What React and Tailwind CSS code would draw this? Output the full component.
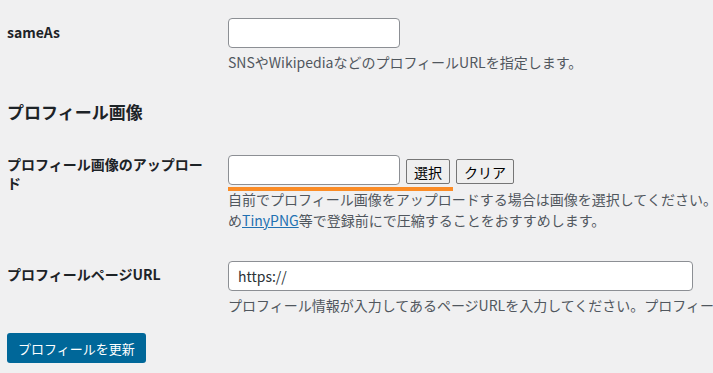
export default function App() {
    const font = { fontFamily: '"Noto Sans CJK JP", "Noto Sans", sans-serif' };

    return (
        <div className="w-full h-[373px] overflow-hidden bg-[#f0f0f1] text-[#1d2327] text-[14px]" style={font}>
            <div className="pl-[7px] pt-[18px]">
                {/* sameAs */}
                <div className="flex">
                    <div className="w-[221px] shrink-0 pr-[21px]">
                        <label className="block mt-[4px] leading-[20px] font-bold">sameAs</label>
                    </div>
                    <div className="flex-1 min-w-0">
                        <input type="text" className="block w-[172px] h-[30px] bg-white border border-[#8c8f94] rounded-[4px] px-2 outline-none" />
                        <p className="mt-[4px] leading-[21px] text-[#50575e] whitespace-nowrap">SNSやWikipediaなどのプロフィールURLを指定します。</p>
                    </div>
                </div>

                <h2 className="mt-[27px] text-[17px] leading-[24px] font-bold">プロフィール画像</h2>

                {/* upload */}
                <div className="flex mt-[31px]">
                    <div className="w-[221px] shrink-0 pr-[21px]">
                        <label className="block leading-[19px] font-bold">プロフィール画像のアップロード</label>
                    </div>
                    <div className="flex-1 min-w-0 relative">
                        <div className="flex items-end gap-[6px]">
                            <input type="text" className="block w-[172px] h-[30px] bg-white border border-[#8c8f94] rounded-[4px] px-2 outline-none" />
                            <button className="h-[25px] mb-[1px] px-[7px] bg-[#efefef] border border-[#767676] rounded-[2px] text-black leading-none">選択</button>
                            <button className="h-[25px] mb-[1px] px-[7px] bg-[#efefef] border border-[#767676] rounded-[2px] text-black leading-none">クリア</button>
                        </div>
                        <div className="absolute left-0 top-[32px] w-[225px] h-[4px] bg-[#fb8c26]"></div>
                        <p className="mt-[4px] leading-[21px] text-[#50575e] whitespace-nowrap">
                            自前でプロフィール画像をアップロードする場合は画像を選択してください。画像はあらかじ
                            <br />
                            め<a href="#" className="text-[#2271b1] underline">TinyPNG</a>等で登録前にで圧縮することをおすすめします。
                        </p>
                    </div>
                </div>

                {/* profile url */}
                <div className="flex mt-[30px]">
                    <div className="w-[221px] shrink-0 pr-[21px]">
                        <label className="block mt-[3px] leading-[20px] font-bold">プロフィールページURL</label>
                    </div>
                    <div className="flex-1 min-w-0">
                        <input type="text" defaultValue="https://" className="block w-[465px] h-[30px] bg-white border border-[#8c8f94] rounded-[4px] px-[9px] text-[#2c3338] outline-none" />
                        <p className="mt-[4px] leading-[21px] text-[#50575e] whitespace-nowrap">プロフィール情報が入力してあるページURLを入力してください。プロフィールページがない場合は空欄のままにしてください。</p>
                    </div>
                </div>

                <button className="mt-[17px] h-[30px] px-[11px] bg-[#006799] text-white text-[13px] rounded-[3px] leading-none">プロフィールを更新</button>
            </div>
        </div>
    );
}
